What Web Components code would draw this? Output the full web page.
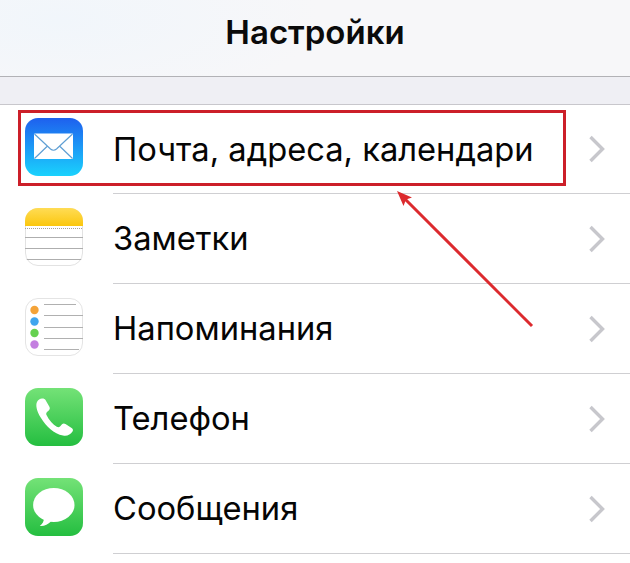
<!DOCTYPE html>
<html lang="ru">
<head>
<meta charset="utf-8">
<title>Настройки</title>
<style>
  html, body { margin: 0; padding: 0; background: #fff; }
  body { width: 630px; height: 563px; overflow: hidden; }
</style>
</head>
<body>
<settings-screen>
  <nav-bar>Настройки</nav-bar>
  <settings-row first icon="mail">Почта, адреса, календари</settings-row>
  <settings-row icon="notes">Заметки</settings-row>
  <settings-row icon="reminders">Напоминания</settings-row>
  <settings-row icon="phone">Телефон</settings-row>
  <settings-row icon="messages">Сообщения</settings-row>
  <callout-mark></callout-mark>
</settings-screen>

<script>
class SettingsScreen extends HTMLElement {
  constructor() {
    super();
    this.attachShadow({ mode: 'open' });
    this.shadowRoot.innerHTML = `
      <style>
        :host {
          display: block;
          position: relative;
          width: 630px;
          height: 563px;
          overflow: hidden;
          background: #fff;
          color: #050505;
          font-family: Inter, Roboto, "Liberation Sans", sans-serif;
        }
        .gap {
          height: 27px;
          background: #efeff4;
          border-bottom: 1px solid #c8c7cc;
        }
      </style>
      <slot name="nav"></slot>
      <div class="gap"></div>
      <slot></slot>
    `;
    const nav = this.querySelector('nav-bar');
    if (nav) nav.slot = 'nav';
  }
}

class NavBar extends HTMLElement {
  constructor() {
    super();
    this.attachShadow({ mode: 'open' });
    this.shadowRoot.innerHTML = `
      <style>
        :host {
          display: flex;
          justify-content: center;
          align-items: center;
          box-sizing: border-box;
          height: 77px;
          padding: 0 0 13px;
          border-bottom: 1px solid #b2b2b6;
          background:
            radial-gradient(ellipse 260px 90px at 60px 20px, #f1f6fb, rgba(241,246,251,0)),
            #f7f7f9;
          font-size: 33px;
          font-weight: 600;
          color: #0a0a0a;
        }
      </style>
      <slot></slot>
    `;
  }
}

const ICONS = {
  mail: `
    <defs><linearGradient id="g" x1="0" y1="0" x2="0" y2="1">
      <stop offset="0" stop-color="#1e60ee"/><stop offset="1" stop-color="#1ad2fd"/>
    </linearGradient></defs>
    <rect width="58" height="58" rx="13" fill="url(#g)"/>
    <rect x="9" y="15.5" width="39" height="25.5" rx="1" fill="#fff"/>
    <path d="M9.5 16 L25.5 31 Q28.5 33.5 31.5 31 L47.5 16 M9.5 40.5 L22.5 28 M47.5 40.5 L34.5 28"
      fill="none" stroke="#5f9fd4" stroke-width="1.2"/>`,
  notes: `
    <defs><linearGradient id="g" x1="0" y1="0" x2="0" y2="1">
      <stop offset="0" stop-color="#ffdc55"/><stop offset="1" stop-color="#fbc70e"/>
    </linearGradient>
    <clipPath id="c"><rect width="58" height="58" rx="13"/></clipPath></defs>
    <rect x=".5" y=".5" width="57" height="57" rx="12.5" fill="#fff" stroke="#e2e2e2"/>
    <g clip-path="url(#c)">
      <rect width="58" height="18" fill="url(#g)"/>
      <path d="M0 20.5H58" stroke="#a8a29a" stroke-width="1" stroke-dasharray="1 1"/>
      <path d="M0 29.5H58M0 40.5H58M0 51.5H58" stroke="#aeaeae" stroke-width="1"/>
    </g>`,
  reminders: `
    <rect x=".5" y=".5" width="57" height="57" rx="12.5" fill="#fff" stroke="#e4e4e4"/>
    <path d="M19 6.5H51M19 17.5H58M19 29.5H58M19 40.5H58M19 51.5H54" stroke="#b0b0b0" stroke-width="1"/>
    <circle cx="9.5" cy="12" r="4.2" fill="#f4a338"/>
    <circle cx="9.5" cy="23.5" r="4.2" fill="#3fa5ee"/>
    <circle cx="9.5" cy="35" r="4.2" fill="#66d150"/>
    <circle cx="9.5" cy="46.5" r="4.2" fill="#c47fe0"/>`,
  phone: `
    <defs><linearGradient id="g" x1="0" y1="0" x2="0" y2="1">
      <stop offset="0" stop-color="#74e277"/><stop offset="1" stop-color="#24be40"/>
    </linearGradient></defs>
    <rect width="58" height="58" rx="13" fill="url(#g)"/>
    <path fill="#fff" d="M17 10.5C15 10.5 13 12 12 14C10.5 17 11.5 23 16 30C21 38 29 46 38 47.5C42 48.5 45.5 46.5 47.5 43.5C48.3 42.3 48 41 47 40.2L40.5 36C39.2 35.2 38 35.3 37 36.3L35 38.5C34 39.4 33 39.4 31.8 38.8C28 36.5 24 32 21.5 27C21 26 21.2 25 22 24L24 22.2C25 21.2 25 20 24.4 18.8L20.5 12C19.7 10.8 18.5 10.3 17 10.5Z"/>`,
  messages: `
    <defs><linearGradient id="g" x1="0" y1="0" x2="0" y2="1">
      <stop offset="0" stop-color="#74e277"/><stop offset="1" stop-color="#24be40"/>
    </linearGradient></defs>
    <rect width="58" height="58" rx="13" fill="url(#g)"/>
    <ellipse cx="28.8" cy="27" rx="20.7" ry="17" fill="#fff"/>
    <path fill="#fff" d="M19 40C19 43 17.5 46 14.8 48C19 48.5 23 46.5 26 43.5Z"/>`
};

class SettingsRow extends HTMLElement {
  constructor() {
    super();
    this.attachShadow({ mode: 'open' });
    this.shadowRoot.innerHTML = `
      <style>
        :host {
          display: block;
          height: 90px;
          box-sizing: border-box;
          padding-left: 25px;
          font-size: 32.7px;
          line-height: 40px;
        }
        :host([first]) {
          height: 89px;
        }
        .row {
          display: flex;
          height: 100%;
          box-sizing: border-box;
          padding-top: 14px;
        }
        :host([first]) .row { padding-top: 13px; }
        svg.icon { flex: none; display: block; width: 58px; height: 58px; margin-right: 30px; }
        .body {
          flex: 1;
          display: flex;
          align-items: center;
          justify-content: space-between;
          box-sizing: border-box;
          margin-top: -14px;
          padding-right: 25px;
          border-bottom: 1px solid #cfcfd2;
        }
        :host([first]) .body { margin-top: -13px; }
        .label { margin-top: -1px; white-space: nowrap; }
        svg.chev { flex: none; display: block; }
      </style>
      <div class="row">
        <svg class="icon" viewBox="0 0 58 58"></svg>
        <div class="body">
          <span class="label"><slot></slot></span>
          <svg class="chev" width="17" height="28" viewBox="0 0 17 28">
            <path d="M2.5 2 L14.5 14 L2.5 26" fill="none" stroke="#c7c7cc" stroke-width="3.4"/>
          </svg>
        </div>
      </div>
    `;
    this.shadowRoot.querySelector('svg.icon').innerHTML = ICONS[this.getAttribute('icon')] || '';
  }
}

class CalloutMark extends HTMLElement {
  constructor() {
    super();
    this.attachShadow({ mode: 'open' });
    this.shadowRoot.innerHTML = `
      <style>
        :host { position: absolute; inset: 0; display: block; pointer-events: none; }
        .box {
          position: absolute;
          left: 18px;
          top: 110px;
          width: 548px;
          height: 76px;
          box-sizing: border-box;
          border: 3px solid #cc1f29;
        }
        svg { position: absolute; left: 0; top: 0; }
      </style>
      <div class="box"></div>
      <svg width="630" height="563" viewBox="0 0 630 563">
        <path d="M532 326 L403 197" stroke="#dc2a2e" stroke-width="3" fill="none"/>
        <path d="M397 191 L412 197.5 L406 199.5 L403.5 206Z" fill="#dc2a2e"/>
      </svg>
    `;
  }
}

customElements.define('settings-screen', SettingsScreen);
customElements.define('nav-bar', NavBar);
customElements.define('settings-row', SettingsRow);
customElements.define('callout-mark', CalloutMark);
</script>
</body>
</html>
